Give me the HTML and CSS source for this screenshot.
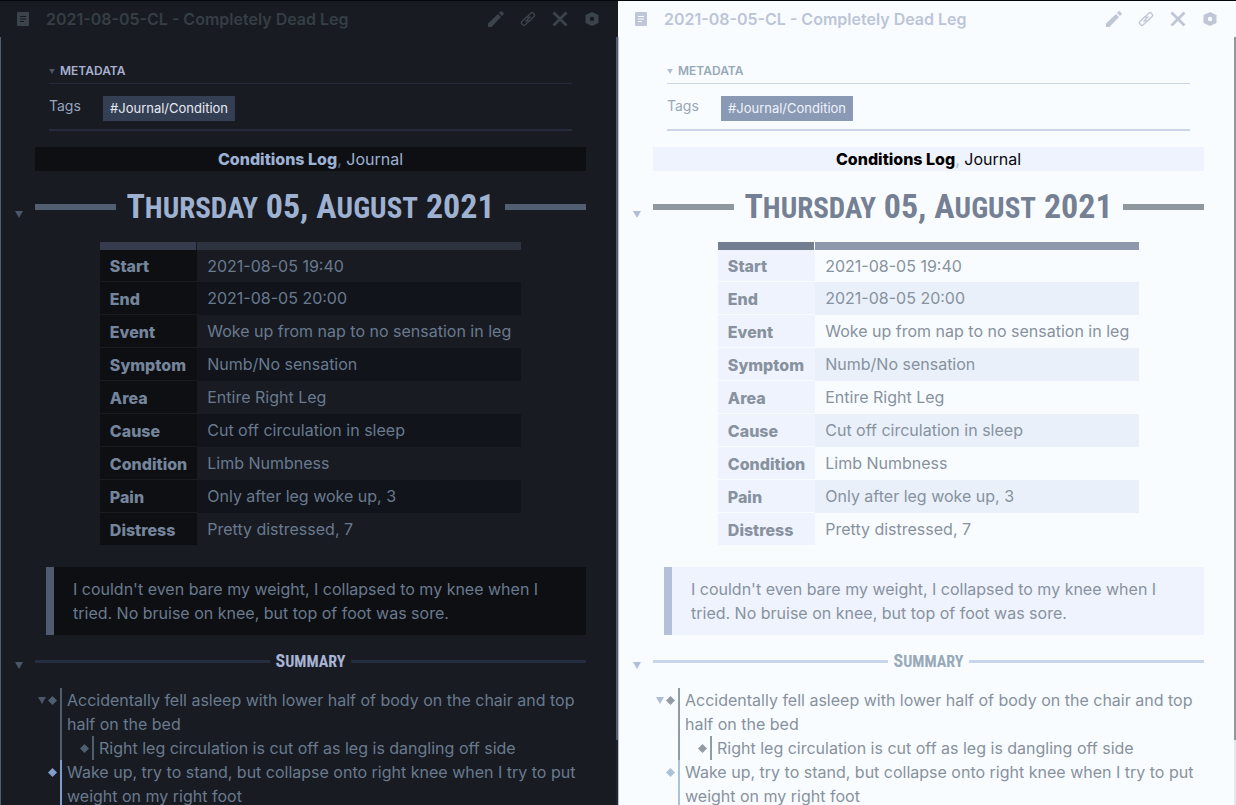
FILE: index.html
```html
<!DOCTYPE html>
<html lang="en">
<head>
<meta charset="utf-8">
<title>2021-08-05-CL - Completely Dead Leg</title>
<link rel="stylesheet" href="styles.css">
</head>
<body>
<svg class="sprite" aria-hidden="true">
  <symbol id="doc" viewBox="0 0 12 14"><path fill-rule="evenodd" d="M1 0h10a1 1 0 0 1 1 1v12a1 1 0 0 1-1 1H1a1 1 0 0 1-1-1V1a1 1 0 0 1 1-1zM3 4v1h6V4zM3 6.500v1h6v-1zM3 9v1h4V9z"/></symbol>
  <symbol id="pencil" viewBox="0 0 16 16"><path d="M0 12.500 10 3l3 3-9.500 10H0zM11 2l1.700-1.700q.5-.5 1 0L15.700 2.300q.5.500 0 1L14 5z"/></symbol>
  <symbol id="link" viewBox="0 0 16 16"><g fill="none" stroke="currentColor" stroke-width="1.300"><path d="M6.500 6.500 11 2q1-1 2 0l1.200 1.200q1 1 0 2L9.700 9.700q-1 1-2 0L7 9"/><path d="M9.500 9.500 5 14q-1 1-2 0l-1.200-1.200q-1-1 0-2l4.500-4.500q1-1 2 0L9 7M5.500 10.500l5-5"/></g></symbol>
  <symbol id="close" viewBox="0 0 16 16"><path fill="none" stroke="currentColor" stroke-width="2.800" d="M1.500 1.500l13 13M14.500 1.500l-13 13"/></symbol>
  <symbol id="hex" viewBox="0 0 14 14"><path fill-rule="evenodd" d="M7 0l6.500 3v8L7 14 .5 11V3zM7 4.800a2.200 2.200 0 1 0 0 4.400 2.200 2.200 0 0 0 0-4.400z"/></symbol>
  <symbol id="fold" viewBox="0 0 8 7"><path d="M0 0h8L4 7z"/></symbol>
  <symbol id="diamond" viewBox="0 0 8 8"><path d="M4 0l4 4-4 4-4-4z"/></symbol>
</svg>
<main class="workspace">
  <section class="pane dark">
    <header class="pane-header">
      <svg class="doc-icon"><use href="#doc"/></svg>
      <span class="pane-title">2021-08-05-CL - Completely Dead Leg</span>
      <button class="action" aria-label="Edit"><svg><use href="#pencil"/></svg></button>
      <button class="action" aria-label="Copy link"><svg><use href="#link"/></svg></button>
      <button class="action" aria-label="Close"><svg><use href="#close"/></svg></button>
      <button class="action" aria-label="More options"><svg class="small"><use href="#hex"/></svg></button>
    </header>
    <div class="view">
      <article class="note">
        <div class="metadata">
          <div class="metadata-head"><svg class="fold tiny"><use href="#fold"/></svg>METADATA</div>
          <div class="metadata-row"><span class="metadata-key">Tags</span><a class="tag" href="#tag">#Journal/Condition</a></div>
        </div>
        <p class="kind"><b>Conditions Log</b><i>,</i> Journal</p>
        <div class="heading first"><svg class="fold"><use href="#fold"/></svg><h1><span class="word">T<span>hursday</span> 05, A<span>ugust</span> 2021</span></h1></div>
        <table>
          <thead><tr><th></th><th></th></tr></thead>
          <tbody>
            <tr><th scope="row">Start</th><td>2021-08-05 19:40</td></tr>
            <tr><th scope="row">End</th><td>2021-08-05 20:00</td></tr>
            <tr><th scope="row">Event</th><td>Woke up from nap to no sensation in leg</td></tr>
            <tr><th scope="row">Symptom</th><td>Numb/No sensation</td></tr>
            <tr><th scope="row">Area</th><td>Entire Right Leg</td></tr>
            <tr><th scope="row">Cause</th><td>Cut off circulation in sleep</td></tr>
            <tr><th scope="row">Condition</th><td>Limb Numbness</td></tr>
            <tr><th scope="row">Pain</th><td>Only after leg woke up, 3</td></tr>
            <tr><th scope="row">Distress</th><td>Pretty distressed, 7</td></tr>
          </tbody>
        </table>
        <blockquote>I couldn't even bare my weight, I collapsed to my knee when I tried. No bruise on knee, but top of foot was sore.</blockquote>
        <div class="heading second"><svg class="fold"><use href="#fold"/></svg><h2><span class="word">S<span>ummary</span></span></h2></div>
        <ul class="list">
          <li><span class="marks"><svg class="fold"><use href="#fold"/></svg><svg class="bullet"><use href="#diamond"/></svg></span>
            <div class="item">Accidentally fell asleep with lower half of body on the chair and top half on the bed
              <ul><li><span class="marks"><svg class="bullet"><use href="#diamond"/></svg></span><div class="item">Right leg circulation is cut off as leg is dangling off side</div></li></ul>
            </div></li>
          <li class="accent"><span class="marks"><svg class="bullet"><use href="#diamond"/></svg></span>
            <div class="item">Wake up, try to stand, but collapse onto right knee when I try to put weight on my right foot</div></li>
        </ul>
      </article>
      <div class="scrollbar"></div>
    </div>
  </section>
  <section class="pane light">
    <header class="pane-header">
      <svg class="doc-icon"><use href="#doc"/></svg>
      <span class="pane-title">2021-08-05-CL - Completely Dead Leg</span>
      <button class="action" aria-label="Edit"><svg><use href="#pencil"/></svg></button>
      <button class="action" aria-label="Copy link"><svg><use href="#link"/></svg></button>
      <button class="action" aria-label="Close"><svg><use href="#close"/></svg></button>
      <button class="action" aria-label="More options"><svg class="small"><use href="#hex"/></svg></button>
    </header>
    <div class="view">
      <article class="note">
        <div class="metadata">
          <div class="metadata-head"><svg class="fold tiny"><use href="#fold"/></svg>METADATA</div>
          <div class="metadata-row"><span class="metadata-key">Tags</span><a class="tag" href="#tag">#Journal/Condition</a></div>
        </div>
        <p class="kind"><b>Conditions Log</b><i>,</i> Journal</p>
        <div class="heading first"><svg class="fold"><use href="#fold"/></svg><h1><span class="word">T<span>hursday</span> 05, A<span>ugust</span> 2021</span></h1></div>
        <table>
          <thead><tr><th></th><th></th></tr></thead>
          <tbody>
            <tr><th scope="row">Start</th><td>2021-08-05 19:40</td></tr>
            <tr><th scope="row">End</th><td>2021-08-05 20:00</td></tr>
            <tr><th scope="row">Event</th><td>Woke up from nap to no sensation in leg</td></tr>
            <tr><th scope="row">Symptom</th><td>Numb/No sensation</td></tr>
            <tr><th scope="row">Area</th><td>Entire Right Leg</td></tr>
            <tr><th scope="row">Cause</th><td>Cut off circulation in sleep</td></tr>
            <tr><th scope="row">Condition</th><td>Limb Numbness</td></tr>
            <tr><th scope="row">Pain</th><td>Only after leg woke up, 3</td></tr>
            <tr><th scope="row">Distress</th><td>Pretty distressed, 7</td></tr>
          </tbody>
        </table>
        <blockquote>I couldn't even bare my weight, I collapsed to my knee when I tried. No bruise on knee, but top of foot was sore.</blockquote>
        <div class="heading second"><svg class="fold"><use href="#fold"/></svg><h2><span class="word">S<span>ummary</span></span></h2></div>
        <ul class="list">
          <li><span class="marks"><svg class="fold"><use href="#fold"/></svg><svg class="bullet"><use href="#diamond"/></svg></span>
            <div class="item">Accidentally fell asleep with lower half of body on the chair and top half on the bed
              <ul><li><span class="marks"><svg class="bullet"><use href="#diamond"/></svg></span><div class="item">Right leg circulation is cut off as leg is dangling off side</div></li></ul>
            </div></li>
          <li class="accent"><span class="marks"><svg class="bullet"><use href="#diamond"/></svg></span>
            <div class="item">Wake up, try to stand, but collapse onto right knee when I try to put weight on my right foot</div></li>
        </ul>
      </article>
      <div class="scrollbar"></div>
    </div>
  </section>
</main>
</body>
</html>
```
FILE: styles.css
```css
* { box-sizing: border-box; }
body { margin: 0; font: 16px/24px Inter, sans-serif; }
.sprite { display: none; }
svg { fill: currentColor; flex: none; }

.workspace { display: flex; height: 100vh; overflow: hidden; border-top: 1px solid #06070b; }
.pane { flex: 1; min-width: 0; display: flex; flex-direction: column; background: var(--bg); color: var(--text); }

.dark {
  --bg: #181b22; --text: #697a8e; --muted: #353f45; --icon: #3b444b;
  --meta: #a7b0cf; --key: #97a5bf; --rule: #252b3c; --fold: #4c566a;
  --tag-bg: #343f53; --tag: #e4eaf2;
  --block: #0e0f13; --kind: #9db1d3; --kind-bold: #9db1d3; --comma: #526b80;
  --h1: #9fb1d0; --h1-bar: #525f70; --h2: #a9b3d3; --h2-bar: #252d40;
  --head-a: #363c4d; --head-b: #2e3340; --stripe: #11141b; --th: #74859c;
  --quote: #4f5b6e; --list: #4f5e6e; --accent: #819dcc;
  --thumb: #4f5e70; --track: #202630;
}
.light {
  --bg: #f9fcff; --text: #87929e; --muted: #bcc5d7; --icon: #bfc7d6;
  --meta: #98a9b8; --key: #98a5b8; --rule: #ccd4e9; --fold: #b0bdd6;
  --tag-bg: #8a99b4; --tag: #eef3fc;
  --block: #eff3fe; --kind: #080808; --kind-bold: #000; --comma: #9fc0d8;
  --h1: #758094; --h1-bar: #8f989f; --h2: #98a9b8; --h2-bar: #c9d5ea;
  --head-a: #737f90; --head-b: #8f98aa; --stripe: #e9f0fa; --th: #87929e;
  --quote: #b4c0d9; --list: #929aa3; --accent: #abc2d9;
  --thumb: #8f989f; --track: #e4e9f0;
}

.pane-header { display: flex; align-items: center; height: 36px; padding: 0 10px 0 17px; color: var(--icon); }
.doc-icon { width: 12px; height: 14px; margin-right: 17px; }
.pane-title { flex: 1; font-weight: 600; color: var(--muted); white-space: nowrap; }
.action { display: grid; place-items: center; width: 32px; height: 32px; padding: 0; border: 0; background: none; color: inherit; }
.action svg { width: 16px; height: 16px; }
.action .small { width: 14px; height: 14px; }

.view { flex: 1; display: flex; min-height: 0; border-left: 1px solid var(--thumb); }
.note { flex: 1; min-width: 0; padding: 22px 30px 0 34px; }
.scrollbar { width: 2px; background: linear-gradient(var(--thumb) 703px, var(--track) 703px); }
.light .view { border-left-color: #b9c1c9; }

.fold { width: 8px; height: 7px; color: var(--fold); }
.fold.tiny { width: 6px; height: 5px; margin-right: 5px; }

.metadata { margin: 0 14px; border-bottom: 2px solid var(--rule); }
.metadata-head { display: flex; align-items: center; height: 25px; border-bottom: 1px solid var(--rule); color: var(--meta); font-size: 12px; font-weight: 600; }
.metadata-row { display: flex; height: 45px; padding-top: 12px; font-size: 14px; }
.metadata-key { width: 54px; line-height: 20px; color: var(--key); }
.tag { height: 25px; padding: 0 7px; background: var(--tag-bg); color: var(--tag); font-size: 13px; line-height: 25px; text-decoration: none; }

.kind { margin: 16px 0 0; background: var(--block); color: var(--kind); text-align: center; }
.kind b { color: var(--kind-bold); font-weight: 800; }
.kind i { color: var(--comma); font-style: normal; }

.heading { display: flex; align-items: center; margin-left: -20px; }
.heading .fold { margin: 16px 12px 0 0; }
h1, h2 { flex: 1; display: flex; align-items: center; margin: 0; font-family: "Roboto Condensed", "Liberation Sans Narrow", "DejaVu Sans Condensed", sans-serif; font-weight: 700; }
h1::before, h1::after, h2::before, h2::after { content: ""; flex: 1; }
.word { text-transform: uppercase; white-space: nowrap; }
h1 { gap: 10px; height: 71px; color: var(--h1); font-size: 34px; }
h1 .word span { font-size: 29px; }
h1::before, h1::after { height: 6px; background: var(--h1-bar); }
h2 { gap: 6px; height: 52px; color: var(--h2); font-size: 18px; }
h2 .word span { font-size: 16px; }
h2::before, h2::after { height: 3px; background: var(--h2-bar); }
.second .fold { margin-top: 9px; }

table { margin: 0 auto; border-collapse: separate; border-spacing: 0; }
thead th { height: 8px; padding: 0; background: var(--head-b); }
thead th:first-child { background: var(--head-a); border-right: 1px solid var(--bg); }
tbody th, tbody td { padding: 4px 10px 5px; text-align: left; vertical-align: top; }
tbody th { padding: 5px 10px 3px; background: var(--block); color: var(--th); font-weight: 800; border-bottom: 1px solid var(--bg); }
tbody tr:first-child td { padding-bottom: 4px; }
tbody tr:first-child th { padding-top: 4px; }
tbody tr:nth-child(even) td { background: var(--stripe); }

blockquote { margin: 21px 0 0 11px; padding: 10px 19px; border-left: 8px solid var(--quote); background: var(--block); }

ul { list-style: none; margin: 0; padding: 0; }
.list { padding-top: 1px; }
li { display: flex; color: var(--list); }
li.accent { color: var(--accent); }
.marks { flex: none; display: flex; align-items: center; justify-content: flex-end; gap: 2px; width: 25px; height: 24px; padding-right: 3px; }
.bullet { width: 9px; height: 9px; }
.item { flex: 1; min-width: 0; padding-left: 5px; border-left: 2px solid var(--list); color: var(--text); }
.accent > .item { border-color: var(--accent); }
```
